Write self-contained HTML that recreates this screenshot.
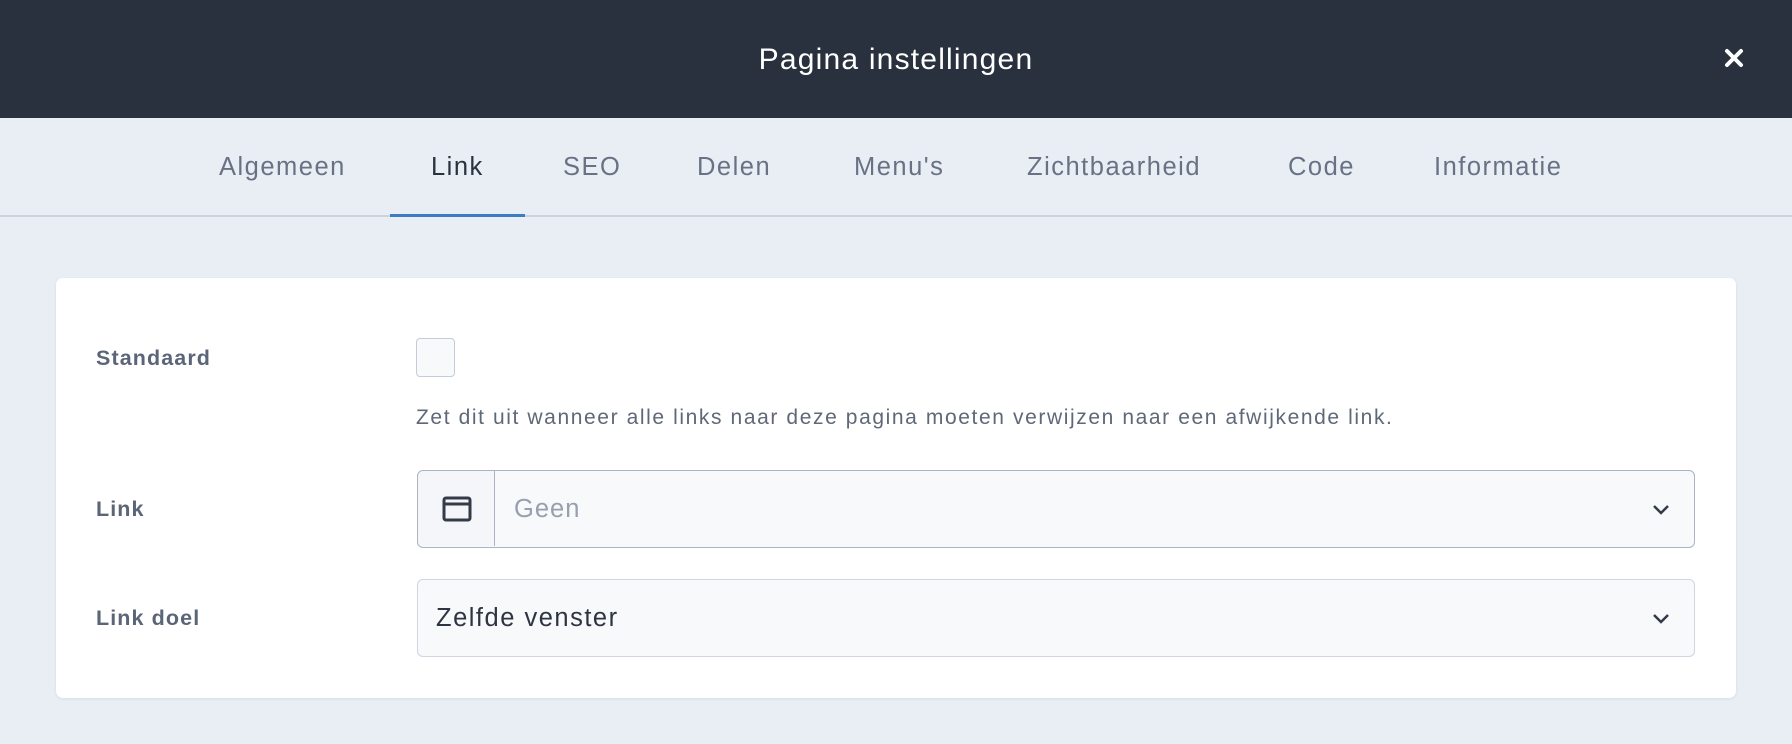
<!DOCTYPE html>
<html><head><meta charset="utf-8"><style>
*{box-sizing:border-box;margin:0;padding:0}
body{width:1792px;height:744px;background:#e9eef5;font-family:"Liberation Sans",sans-serif;position:relative;overflow:hidden}
.hdr{position:absolute;left:0;top:0;width:1792px;height:118px;background:#29313e;color:#fff}
.hdr .t{position:absolute;left:0;right:0;top:43px;text-align:center;font-size:30px;letter-spacing:1.2px}
.hdr .x{position:absolute;left:1722px;top:46px}
.tab{position:absolute;top:153px;font-size:25.5px;color:#687284;white-space:nowrap;letter-spacing:1.5px}
.line{position:absolute;left:0;top:215px;width:1792px;height:2px;background:#cbd3df}
.act{position:absolute;left:390px;top:214px;width:135px;height:3px;background:#3d7cc0}
.card{position:absolute;left:56px;top:278px;width:1680px;height:420px;background:#fff;border-radius:7px;box-shadow:0 1px 3px rgba(0,0,0,.08)}
.lbl{position:absolute;left:96px;font-size:21.5px;font-weight:bold;color:#5b6578;letter-spacing:1.1px}
.cb{position:absolute;left:416px;top:338px;width:39px;height:39px;border:1.5px solid #c4ccd7;border-radius:4px;background:#f7f9fb}
.help{position:absolute;left:416px;top:406px;font-size:21px;color:#5f6878;white-space:nowrap;letter-spacing:1.6px}
.sel{position:absolute;left:417px;width:1278px;height:78px;border:1.5px solid #cfd6e0;border-radius:6px;background:#f7f9fb}
.ch{position:absolute;right:24px;top:31px}
</style></head><body>
<div class="hdr"><div class="t">Pagina instellingen</div>
<svg class="x" width="24" height="24" viewBox="0 0 24 24"><path d="M5 5L19 19M19 5L5 19" stroke="#fff" stroke-width="4" stroke-linecap="round"/></svg></div>
<div class="tab" style="left:219px">Algemeen</div>
<div class="tab" style="left:431px;color:#2a3240">Link</div>
<div class="tab" style="left:563px">SEO</div>
<div class="tab" style="left:697px">Delen</div>
<div class="tab" style="left:854px">Menu's</div>
<div class="tab" style="left:1027px">Zichtbaarheid</div>
<div class="tab" style="left:1288px">Code</div>
<div class="tab" style="left:1434px">Informatie</div>
<div class="line"></div><div class="act"></div>
<div class="card"></div>
<div class="lbl" style="top:346px">Standaard</div>
<div class="cb"></div>
<div class="help">Zet dit uit wanneer alle links naar deze pagina moeten verwijzen naar een afwijkende link.</div>
<div class="lbl" style="top:497px">Link</div>
<div class="sel" style="top:470px;border-color:#aab4c2">
 <div style="position:absolute;left:0;top:0;width:77px;height:75px;border-right:1.5px solid #aab4c2;background:#f4f6f9;border-radius:6px 0 0 6px"></div>
 <svg style="position:absolute;left:24px;top:25px" width="30" height="26" viewBox="0 0 30 26"><rect x="2" y="2" width="26" height="22" rx="2" fill="none" stroke="#333b48" stroke-width="3"/><line x1="2" y1="8" x2="28" y2="8" stroke="#333b48" stroke-width="3"/></svg>
 <div style="position:absolute;left:96px;top:24px;font-size:25.5px;color:#97a0ae;letter-spacing:1px">Geen</div>
 <svg class="ch" width="18" height="14" viewBox="0 0 18 14"><path d="M2 4L9 11L16 4" fill="none" stroke="#333b48" stroke-width="2.5"/></svg>
</div>
<div class="lbl" style="top:606px">Link doel</div>
<div class="sel" style="top:579px">
 <div style="position:absolute;left:18px;top:24px;font-size:25.5px;color:#2e3542;letter-spacing:1.5px">Zelfde venster</div>
 <svg class="ch" width="18" height="14" viewBox="0 0 18 14"><path d="M2 4L9 11L16 4" fill="none" stroke="#333b48" stroke-width="2.5"/></svg>
</div>
</body></html>
